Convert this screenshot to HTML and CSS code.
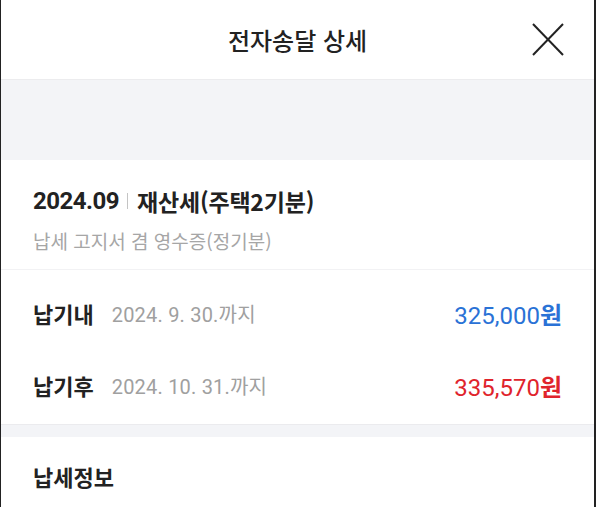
FILE: index.html
```html
<!DOCTYPE html>
<html lang="ko">
<head>
<meta charset="utf-8">
<title>전자송달 상세</title>
<link rel="stylesheet" href="styles.css">
</head>
<body>
<div class="screen">
  <header class="topbar">
    <h1 class="topbar-title">전자송달 상세</h1>
    <button class="close-btn" aria-label="닫기">
      <svg width="34" height="36" viewBox="0 0 34 36" fill="none" stroke="#222" stroke-width="2">
        <line x1="2" y1="2" x2="32" y2="33"/>
        <line x1="32" y1="2" x2="2" y2="33"/>
      </svg>
    </button>
  </header>
  <div class="band band-tall"></div>
  <section class="bill-head">
    <h2 class="bill-title"><span class="num">2024.09</span><span class="sep"></span>재산세(주택2기분)</h2>
    <p class="bill-sub">납세 고지서 겸 영수증(정기분)</p>
  </section>
  <section class="bill-rows">
    <div class="row">
      <span class="row-label">납기내</span>
      <span class="row-date">2024. 9. 30.까지</span>
      <span class="amount amount-blue"><span class="num">325,000</span><b>원</b></span>
    </div>
    <div class="row">
      <span class="row-label">납기후</span>
      <span class="row-date">2024. 10. 31.까지</span>
      <span class="amount amount-red"><span class="num">335,570</span><b>원</b></span>
    </div>
  </section>
  <div class="band band-thin"></div>
  <section class="info">
    <h3 class="info-title">납세정보</h3>
  </section>
</div>
</body>
</html>
```

FILE: styles.css
```css
* { box-sizing: border-box; }
html, body { margin: 0; padding: 0; }
body {
  background: #222;
  font-family: Roboto, "Noto Sans CJK KR", sans-serif;
  color: #222;
}
.screen {
  background: #fff;
  border-left: 1px solid #222;
  border-right: 2px solid #222;
  min-height: 507px;
}
.topbar {
  height: 80px;
  border-bottom: 1px solid #ececee;
  display: flex;
  align-items: center;
  justify-content: center;
  position: relative;
}
.topbar-title {
  margin: 0;
  font-size: 24px;
  line-height: 30px;
  font-weight: 500;
  color: #222;
  font-family: "Noto Sans CJK KR", sans-serif;
}
.close-btn {
  position: absolute;
  right: 29px;
  top: 22px;
  padding: 0;
  border: 0;
  background: none;
  display: block;
}
.close-btn svg { display: block; }
.band { background: #f3f4f7; }
.band-tall { height: 80px; }
.band-thin { height: 13px; border-top: 1px solid #ebebee; }
.bill-head {
  padding: 28px 32px 16px;
  border-bottom: 1px solid #f2f2f4;
}
.bill-title {
  margin: 0;
  font-size: 23px;
  line-height: 26px;
  font-weight: 700;
  display: flex;
  align-items: center;
  font-family: "Noto Sans CJK KR", sans-serif;
  letter-spacing: -0.2px;
}
.num { font-family: Roboto, sans-serif; }
.bill-title .num { font-weight: 700; font-size: 24px; letter-spacing: -0.5px; }
.sep {
  display: inline-block;
  width: 1px;
  height: 16px;
  background: #c4c4c4;
  margin: 0 9px 0 8px;
}
.bill-sub {
  margin: 15px 0 0;
  font-size: 19px;
  line-height: 24px;
  color: #a6a6a6;
  font-family: "Noto Sans CJK KR", sans-serif;
}
.bill-rows { padding: 7px 32px 3px; }
.row {
  height: 72px;
  display: flex;
  align-items: center;
}
.row-label {
  font-size: 22px;
  font-weight: 700;
  font-family: "Noto Sans CJK KR", sans-serif;
  margin-right: 18px;
}
.row-date {
  font-size: 20px;
  color: #a0a0a0;
  letter-spacing: 0.2px;
}
.amount {
  margin-left: auto;
  font-size: 24px;
  display: flex;
  align-items: baseline;
}
.amount b { font-weight: 700; font-family: "Noto Sans CJK KR", sans-serif; }
.amount-blue { color: #2a72d6; }
.amount-red { color: #e0242c; }
.info { padding: 26px 32px 0; }
.info-title {
  margin: 0;
  font-size: 22px;
  line-height: 26px;
  font-weight: 700;
  font-family: "Noto Sans CJK KR", sans-serif;
}
```
